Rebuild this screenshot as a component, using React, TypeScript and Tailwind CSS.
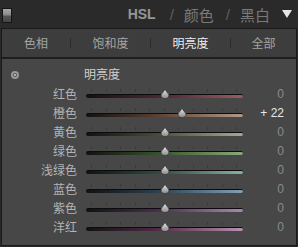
import React from "react";

const rows = [
  { label: "红色", value: "0", track: "bg-[linear-gradient(to_right,#121212,#4a2530_45%,#9a5a66)]" },
  { label: "橙色", value: "+ 22", track: "bg-[linear-gradient(to_right,#121212,#5a4030_45%,#b09a88)]" },
  { label: "黄色", value: "0", track: "bg-[linear-gradient(to_right,#121212,#4a4a30_45%,#a8a890)]" },
  { label: "绿色", value: "0", track: "bg-[linear-gradient(to_right,#121212,#35502a_45%,#88aa78)]" },
  { label: "浅绿色", value: "0", track: "bg-[linear-gradient(to_right,#121212,#2a4a40_45%,#88b0a0)]" },
  { label: "蓝色", value: "0", track: "bg-[linear-gradient(to_right,#121212,#2a4050_45%,#80a0b8)]" },
  { label: "紫色", value: "0", track: "bg-[linear-gradient(to_right,#121212,#4a2a50_45%,#a888b0)]" },
  { label: "洋红", value: "0", track: "bg-[linear-gradient(to_right,#121212,#502a45_45%,#b890b0)]" },
];

const ticks = [0, 1, 2, 3, 4, 5, 6, 7, 8, 9, 10];

function Thumb({ pos }: { pos: number }) {
  return (
    <svg
      width="10"
      height="10"
      viewBox="0 0 10 10"
      className="absolute top-[5px]"
      style={{ left: pos - 5 }}
    >
      <defs>
        <linearGradient id="tg" x1="0" y1="0" x2="0" y2="1">
          <stop offset="0" stopColor="#e4e4e4" />
          <stop offset="1" stopColor="#8a8a8a" />
        </linearGradient>
      </defs>
      <path d="M5 0.5 L8.8 5.6 Q9.4 9.5 5 9.5 Q0.6 9.5 1.2 5.6 Z" fill="url(#tg)" stroke="#2a2a2a" strokeWidth="0.6" />
    </svg>
  );
}

export default function App() {
  const cjk = { fontFamily: '"Noto Sans CJK SC", "Noto Sans", sans-serif' };
  return (
    <div className="w-[298px] h-[247px] bg-[#2a2a2a] overflow-hidden" style={cjk}>
      {/* header */}
      <div className="h-[28px] flex items-center">
        <div className="ml-[2px] mt-[2px] w-[10px] h-[15px] border border-[#151515] bg-[linear-gradient(to_bottom,#a8a8a8,#8a8a8a_45%,#555_55%,#444)]" />
        <div className="ml-auto mr-[6px] flex items-center text-[15px] leading-none text-[#7a7a7a]">
          <span className="font-bold text-[#969696] text-[14px]" style={{ fontFamily: '"Liberation Sans", sans-serif' }}>HSL</span>
          <span className="ml-[14px] text-[#5e5e5e]" style={{ fontFamily: '"Liberation Sans", sans-serif' }}>/</span>
          <span className="ml-[10px]">颜色</span>
          <span className="ml-[12px] text-[#5e5e5e]" style={{ fontFamily: '"Liberation Sans", sans-serif' }}>/</span>
          <span className="ml-[10px]">黑白</span>
          <svg width="10" height="8" viewBox="0 0 10 8" className="ml-[12px]">
            <path d="M0 0 H10 L5 8 Z" fill="#e6e6e6" />
          </svg>
        </div>
      </div>
      {/* panel */}
      <div className="ml-[1px] w-[296px] h-[218px] border border-[#1a1a1a] bg-[#474747] flex flex-col">
        <div className="h-[30px] bg-[#3d3d3d] flex items-center text-[12px] border-b-2 border-[#1e1e1e]">
          <div className="w-[68px] text-center text-[#a4a4a4]">色相</div>
          <div className="w-[80px] flex items-center">
            <div className="w-px h-[10px] bg-[#2a2a2a]" />
            <div className="flex-1 text-center text-[#a4a4a4]">饱和度</div>
          </div>
          <div className="w-[80px] flex items-center">
            <div className="w-px h-[10px] bg-[#2a2a2a]" />
            <div className="flex-1 text-center text-[#ececec]">明亮度</div>
          </div>
          <div className="flex-1 flex items-center">
            <div className="w-px h-[10px] bg-[#2a2a2a]" />
            <div className="flex-1 text-center text-[#a4a4a4]">全部</div>
          </div>
        </div>
        <div className="pt-[4px]">
          <div className="h-[21px] flex items-center">
            <div className="ml-[9px] mt-[3px] w-[8px] h-[8px] rounded-full bg-[#9a9a9a] flex items-center justify-center">
              <div className="w-[4px] h-[4px] rounded-full bg-[#555] flex items-center justify-center">
                <div className="w-[2px] h-[2px] rounded-full bg-[#ccc]" />
              </div>
            </div>
            <span className="ml-[65px] text-[12px] text-[#cfcfcf]">明亮度</span>
          </div>
          {rows.map((r, i) => {
            const pos = r.value === "0" ? 78.5 : 78.5 + 17;
            return (
              <div key={i} className="h-[19px] flex items-center">
                <div className="w-[75px] text-right text-[12px] text-[#b4b4b4]">{r.label}</div>
                <div className="ml-[9px] relative w-[157px] h-[19px]">
                  <div className="absolute left-[5px] right-[6px] top-[5px] h-[3px] flex justify-between">
                    {ticks.map((t) => (
                      <div key={t} className="w-px h-[3px] bg-[#3a3a3a]" />
                    ))}
                  </div>
                  <div className={`absolute left-0 right-0 top-[10px] h-[4px] rounded-full border-t border-[#0c0c0c] ${r.track}`} />
                  <Thumb pos={pos} />
                </div>
                <div
                  className={`flex-1 text-right pr-[12px] text-[12px] ${r.value === "0" ? "text-[#8a8a8a]" : "text-[#e8e8e8]"}`}
                  style={{ fontFamily: '"Liberation Sans", sans-serif' }}
                >
                  {r.value}
                </div>
              </div>
            );
          })}
        </div>
      </div>
    </div>
  );
}
